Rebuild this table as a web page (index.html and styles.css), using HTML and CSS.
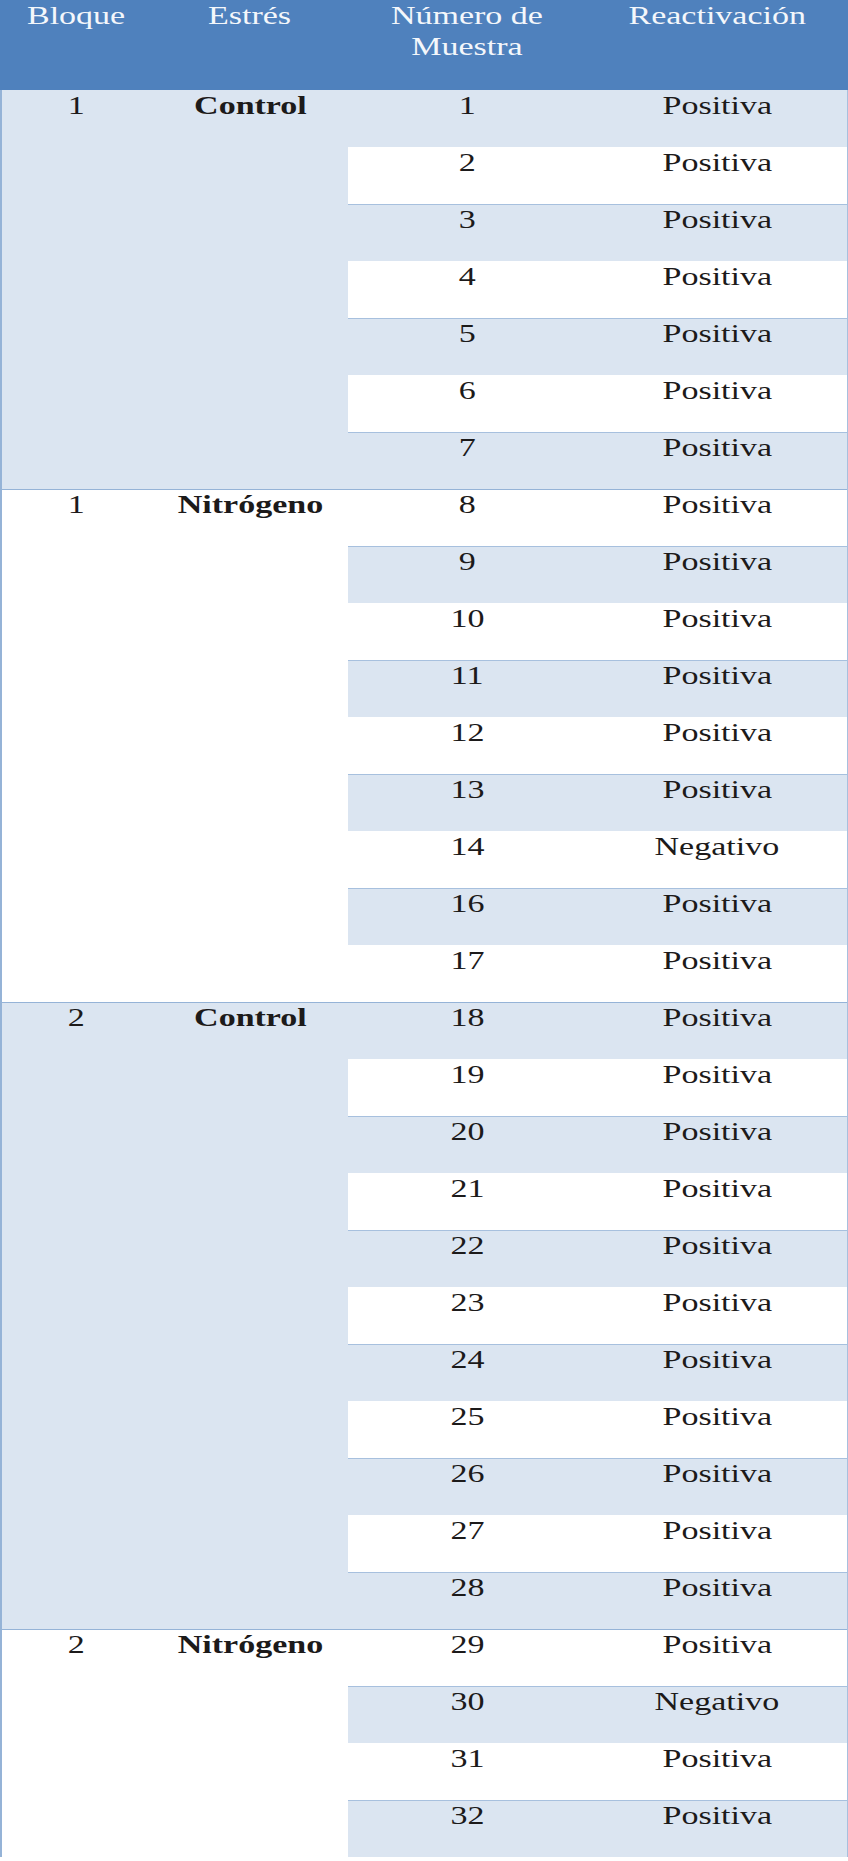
FILE: index.html
```html
<!DOCTYPE html>
<html lang="es">
<head>
<meta charset="utf-8">
<title>Reactivación</title>
<link rel="stylesheet" href="styles.css">
</head>
<body>
<table class="grid">
  <colgroup>
    <col class="c1"><col class="c2"><col class="c3"><col class="c4">
  </colgroup>
  <thead>
    <tr>
      <th><span class="t">Bloque</span></th>
      <th><span class="t">Estrés</span></th>
      <th><span class="t">Número de<br>Muestra</span></th>
      <th><span class="t">Reactivación</span></th>
    </tr>
  </thead>
  <tbody>
    <tr class="b">
      <td rowspan="7" class="g gb"><span class="t">1</span></td>
      <td rowspan="7" class="g gb bold"><span class="t">Control</span></td>
      <td><span class="t">1</span></td><td class="last"><span class="t">Positiva</span></td>
    </tr>
    <tr class="w"><td><span class="t">2</span></td><td class="last"><span class="t">Positiva</span></td></tr>
    <tr class="b"><td><span class="t">3</span></td><td class="last"><span class="t">Positiva</span></td></tr>
    <tr class="w"><td><span class="t">4</span></td><td class="last"><span class="t">Positiva</span></td></tr>
    <tr class="b"><td><span class="t">5</span></td><td class="last"><span class="t">Positiva</span></td></tr>
    <tr class="w"><td><span class="t">6</span></td><td class="last"><span class="t">Positiva</span></td></tr>
    <tr class="b"><td><span class="t">7</span></td><td class="last"><span class="t">Positiva</span></td></tr>

    <tr class="w start">
      <td rowspan="9" class="g gw"><span class="t">1</span></td>
      <td rowspan="9" class="g gw bold"><span class="t">Nitrógeno</span></td>
      <td><span class="t">8</span></td><td class="last"><span class="t">Positiva</span></td>
    </tr>
    <tr class="b"><td><span class="t">9</span></td><td class="last"><span class="t">Positiva</span></td></tr>
    <tr class="w"><td><span class="t">10</span></td><td class="last"><span class="t">Positiva</span></td></tr>
    <tr class="b"><td><span class="t">11</span></td><td class="last"><span class="t">Positiva</span></td></tr>
    <tr class="w"><td><span class="t">12</span></td><td class="last"><span class="t">Positiva</span></td></tr>
    <tr class="b"><td><span class="t">13</span></td><td class="last"><span class="t">Positiva</span></td></tr>
    <tr class="w"><td><span class="t">14</span></td><td class="last"><span class="t">Negativo</span></td></tr>
    <tr class="b"><td><span class="t">16</span></td><td class="last"><span class="t">Positiva</span></td></tr>
    <tr class="w"><td><span class="t">17</span></td><td class="last"><span class="t">Positiva</span></td></tr>

    <tr class="b start">
      <td rowspan="11" class="g gb"><span class="t">2</span></td>
      <td rowspan="11" class="g gb bold"><span class="t">Control</span></td>
      <td><span class="t">18</span></td><td class="last"><span class="t">Positiva</span></td>
    </tr>
    <tr class="w"><td><span class="t">19</span></td><td class="last"><span class="t">Positiva</span></td></tr>
    <tr class="b"><td><span class="t">20</span></td><td class="last"><span class="t">Positiva</span></td></tr>
    <tr class="w"><td><span class="t">21</span></td><td class="last"><span class="t">Positiva</span></td></tr>
    <tr class="b"><td><span class="t">22</span></td><td class="last"><span class="t">Positiva</span></td></tr>
    <tr class="w"><td><span class="t">23</span></td><td class="last"><span class="t">Positiva</span></td></tr>
    <tr class="b"><td><span class="t">24</span></td><td class="last"><span class="t">Positiva</span></td></tr>
    <tr class="w"><td><span class="t">25</span></td><td class="last"><span class="t">Positiva</span></td></tr>
    <tr class="b"><td><span class="t">26</span></td><td class="last"><span class="t">Positiva</span></td></tr>
    <tr class="w"><td><span class="t">27</span></td><td class="last"><span class="t">Positiva</span></td></tr>
    <tr class="b"><td><span class="t">28</span></td><td class="last"><span class="t">Positiva</span></td></tr>

    <tr class="w start">
      <td rowspan="4" class="g gw"><span class="t">2</span></td>
      <td rowspan="4" class="g gw bold"><span class="t">Nitrógeno</span></td>
      <td><span class="t">29</span></td><td class="last"><span class="t">Positiva</span></td>
    </tr>
    <tr class="b"><td><span class="t">30</span></td><td class="last"><span class="t">Negativo</span></td></tr>
    <tr class="w"><td><span class="t">31</span></td><td class="last"><span class="t">Positiva</span></td></tr>
    <tr class="b"><td><span class="t">32</span></td><td class="last"><span class="t">Positiva</span></td></tr>
  </tbody>
</table>
</body>
</html>
```

FILE: styles.css
```css
html, body {
  margin: 0;
  padding: 0;
  background: #ffffff;
}

.grid {
  width: 848px;
  table-layout: fixed;
  border-collapse: separate;
  border-spacing: 0;
  font-family: "Liberation Serif", "Times New Roman", serif;
  font-size: 25px;
  line-height: 31px;
  color: #1c1a1a;
}

.c1 { width: 152px; }
.c2 { width: 196px; }
.c3 { width: 238px; }
.c4 { width: 262px; }

.grid th,
.grid td {
  padding: 0;
  text-align: center;
  vertical-align: top;
}

.grid th {
  height: 90px;
  background: #4f81bd;
  color: #f4f7fb;
  font-weight: normal;
}

.grid td {
  height: 57px;
}

.t {
  display: inline-block;
  transform: scaleX(1.36);
  transform-origin: 50% 50%;
  white-space: nowrap;
}

.bold {
  font-weight: bold;
}

/* alternating sample rows */
.b td { background: #dbe5f1; }
.w td { background: #ffffff; }

/* row rule on top of shaded rows (sample columns) */
.b td {
  box-shadow: inset 0 1px 0 #a7c0de;
}
tbody tr:first-child td {
  box-shadow: none;
}

/* group column cells */
.grid td.gb { background: #dbe5f1; }
.grid td.gw { background: #ffffff; }
.grid td.g:first-child {
  box-shadow: inset 2px 0 0 #95b3d7;
}

/* group separators across the whole width */
.start td {
  box-shadow: inset 0 1px 0 #95b3d7;
}
.grid .start td.g:first-child {
  box-shadow: inset 2px 0 0 #95b3d7, inset 0 1px 0 #95b3d7;
}

/* right edge */
.grid td.last {
  box-shadow: inset -1px 0 0 #a7c0de;
}
.grid .b td.last {
  box-shadow: inset -1px 0 0 #a7c0de, inset 0 1px 0 #a7c0de;
}
.grid tbody tr:first-child td.last {
  box-shadow: inset -1px 0 0 #a7c0de;
}
.grid .start td.last {
  box-shadow: inset -1px 0 0 #a7c0de, inset 0 1px 0 #95b3d7;
}
```
